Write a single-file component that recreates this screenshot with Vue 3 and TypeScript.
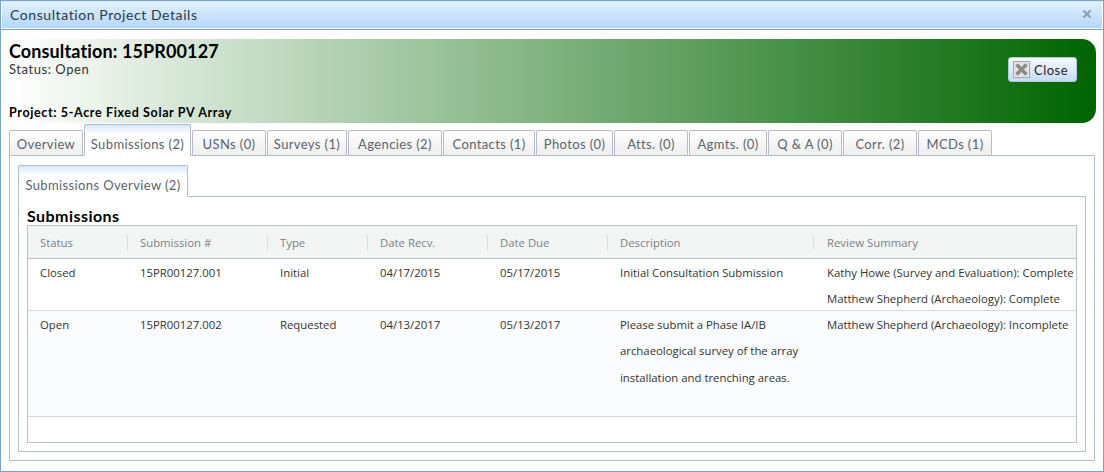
<script setup lang="ts">
interface Row { status: string; id: string; type: string; recv: string; due: string; desc: string[]; review: string[] }
const tabs: string[] = ['Overview', 'Submissions (2)', 'USNs (0)', 'Surveys (1)', 'Agencies (2)', 'Contacts (1)', 'Photos (0)', 'Atts. (0)', 'Agmts. (0)', 'Q & A (0)', 'Corr. (2)', 'MCDs (1)']
const columns: string[] = ['Status', 'Submission #', 'Type', 'Date Recv.', 'Date Due', 'Description', 'Review Summary']
const rows: Row[] = [
  { status: 'Closed', id: '15PR00127.001', type: 'Initial', recv: '04/17/2015', due: '05/17/2015', desc: ['Initial Consultation Submission'], review: ['Kathy Howe (Survey and Evaluation): Complete', 'Matthew Shepherd (Archaeology): Complete'] },
  { status: 'Open', id: '15PR00127.002', type: 'Requested', recv: '04/13/2017', due: '05/13/2017', desc: ['Please submit a Phase IA/IB', 'archaeological survey of the array', 'installation and trenching areas.'], review: ['Matthew Shepherd (Archaeology): Incomplete'] },
]
</script>

<template>
  <div class="window">
    <header class="titlebar">
      <span class="title">Consultation Project Details</span>
      <svg class="dismiss" width="10" height="10" viewBox="0 0 10 10"><path d="M1.5 1.5 8.5 8.5M8.5 1.5 1.5 8.5" stroke="#8fa3b8" stroke-width="2.4" fill="none" /></svg>
    </header>
    <div class="body">
      <section class="banner">
        <div class="banner-text">
          <h1>Consultation: 15PR00127</h1>
          <div class="status">Status: Open</div>
          <div class="project">Project: 5-Acre Fixed Solar PV Array</div>
        </div>
        <button class="close" type="button">
          <svg width="17" height="17" viewBox="0 0 17 17">
            <rect x="0.5" y="0.5" width="16" height="16" fill="#e4e4e4" stroke="#a8a8a8" />
            <path d="M3.5 3.5 13.5 13.5M13.5 3.5 3.5 13.5" stroke="#8a8a8a" stroke-width="3.6" fill="none" />
          </svg>
          <span>Close</span>
        </button>
      </section>
      <nav class="tabs">
        <div v-for="(t, i) in tabs" :key="t" class="tab" :class="{ active: i === 1 }">{{ t }}</div>
      </nav>
      <div class="panel">
        <div class="subtabs">
          <div class="tab active sub">Submissions Overview (2)</div>
        </div>
        <div class="subpanel">
          <h2>Submissions</h2>
          <div class="grid">
            <table>
              <colgroup>
                <col class="c1" /><col class="c2" /><col class="c3" /><col class="c4" /><col class="c5" /><col class="c6" /><col />
              </colgroup>
              <thead>
                <tr><th v-for="c in columns" :key="c"><span>{{ c }}</span></th></tr>
              </thead>
              <tbody>
                <tr v-for="(r, i) in rows" :key="r.id" :class="{ alt: i === 1 }">
                  <td>{{ r.status }}</td>
                  <td>{{ r.id }}</td>
                  <td>{{ r.type }}</td>
                  <td>{{ r.recv }}</td>
                  <td>{{ r.due }}</td>
                  <td><div v-for="d in r.desc" :key="d" class="line">{{ d }}</div></td>
                  <td class="rev"><div v-for="d in r.review" :key="d" class="line">{{ d }}</div></td>
                </tr>
              </tbody>
            </table>
            <div class="grid-footer"></div>
          </div>
        </div>
      </div>
    </div>
  </div>
</template>

<style>
html, body { margin: 0; background: #fff; }
</style>

<style scoped>
.window {
  box-sizing: border-box;
  width: 1104px;
  height: 472px;
  border: 1px solid #7aa3c7;
  background: #fff;
  display: flex;
  flex-direction: column;
  font-family: Lato, "Open Sans", sans-serif;
  overflow: hidden;
}
.titlebar {
  box-sizing: border-box;
  height: 28px;
  flex: none;
  border: 1px solid #fff;
  border-top-color: #d9ebfd;
  border-bottom: 1px solid #fff;
  box-shadow: 0 1px 0 #7aa3c7;
  background: linear-gradient(#e2f0fe, #b4d7fb);
  display: flex;
  align-items: center;
  justify-content: space-between;
  padding: 0 10px 2px 8px;
  position: relative;
}
.title { font-size: 14px; color: #2c3a4a; letter-spacing: 0.58px; }
.body {
  flex: 1;
  display: flex;
  flex-direction: column;
  padding: 10px 7px 10px 8px;
  min-height: 0;
}
.banner {
  height: 84px;
  flex: none;
  box-sizing: border-box;
  border-radius: 0 14px 14px 0;
  background: linear-gradient(to right, #ffffff 0%, #006400 100%);
  display: flex;
  justify-content: space-between;
  padding: 0 19px 0 0;
}
.banner-text { display: flex; flex-direction: column; }
h1 {
  margin: 2px 0 0;
  font-size: 18px;
  line-height: 21px;
  font-weight: 700;
  color: #000;
  letter-spacing: 0.12px;
}
.status { font-size: 13px; line-height: 15px; color: #333; letter-spacing: 0.55px; }
.project { margin-top: auto; margin-bottom: 2px; font-size: 12.5px; line-height: 16px; font-weight: 700; color: #000; letter-spacing: 0.64px; }
.close {
  align-self: flex-start;
  margin-top: 18px;
  box-sizing: border-box;
  width: 69px;
  height: 25px;
  padding: 0 0 0 4px;
  border: 1px solid #b3c9e0;
  border-radius: 3px;
  background: linear-gradient(#f6faff, #c5dcf6);
  display: flex;
  align-items: center;
  gap: 4px;
  font: inherit;
  font-size: 13px;
  letter-spacing: 0.5px;
  color: #1f2230;
}
.tabs {
  flex: none;
  display: grid;
  grid-template-columns: 74px 107px 74px 80px 94px 92px 77px 74px 78px 74px 74px 74px;
  column-gap: 1px;
  justify-content: start;
  align-items: end;
  height: 33px;
  position: relative;
  z-index: 1;
}
.tab {
  box-sizing: border-box;
  height: 26px;
  padding-top: 1px;
  border: 1px solid #b4bccb;
  border-radius: 2px 2px 0 0;
  background: linear-gradient(#fff, #eeeeee);
  color: #5a6470;
  font-size: 13px;
  letter-spacing: 0.38px;
  display: flex;
  align-items: center;
  justify-content: center;
  white-space: nowrap;
}
.tab.active {
  height: 32px;
  border-bottom-color: #fff;
  background: linear-gradient(#d6e7fa 0, #ffffff 9px);
  padding-top: 8px;
}
.panel {
  flex: 1;
  margin-right: 1px;
  margin-top: -1px;
  border: 1px solid #b4bccb;
  padding: 9px 8px 8px;
  display: flex;
  flex-direction: column;
  min-height: 0;
}
.subtabs { flex: none; height: 31px; display: flex; position: relative; z-index: 1; }
.tab.sub { width: 170px; height: 32px; padding-top: 7px; }
.subpanel {
  flex: 1;
  border: 1px solid #b4bccb;
  padding: 9px 8px 8px;
  display: flex;
  flex-direction: column;
  min-height: 0;
}
h2 { margin: 0; font-size: 16px; line-height: 19px; font-weight: 700; color: #000; letter-spacing: 0.45px; }
.grid {
  flex: 1;
  border: 1px solid #bcc4c8;
  display: flex;
  flex-direction: column;
  font-family: "Open Sans", sans-serif;
  font-size: 11.35px;
  color: #333;
  min-height: 0;
}
table { width: 100%; border-collapse: collapse; table-layout: fixed; }
.c1 { width: 100px; }
.c2 { width: 140px; }
.c3 { width: 100px; }
.c4 { width: 120px; }
.c5 { width: 120px; }
.c6 { width: 206px; }
th {
  height: 32px;
  padding: 0 0 0 12px;
  background: #f3f5f4;
  border-bottom: 1px solid #bcc4c8;
  text-align: left;
  font-weight: 400;
  color: #7a8088;
  position: relative;
}
th:last-child { padding-left: 13px; }
th:not(:last-child)::after {
  content: "";
  position: absolute;
  right: 0;
  top: 9px;
  height: 15px;
  width: 1px;
  background: #d8dcdc;
}
td {
  box-sizing: border-box;
  padding: 1px 0 0 12px;
  height: 52px;
  vertical-align: top;
  border-bottom: 1px solid #d5d8dc;
  white-space: nowrap;
  line-height: 26px;
}
td.rev { padding-left: 13px; }
.alt td { background: #fbfcfe; height: 106px; }
.line { height: 26px; }
.line:last-child:not(:first-child) { height: 24px; }
.alt .line { height: 26.4px; }
.grid-footer { flex: 1; }
</style>
